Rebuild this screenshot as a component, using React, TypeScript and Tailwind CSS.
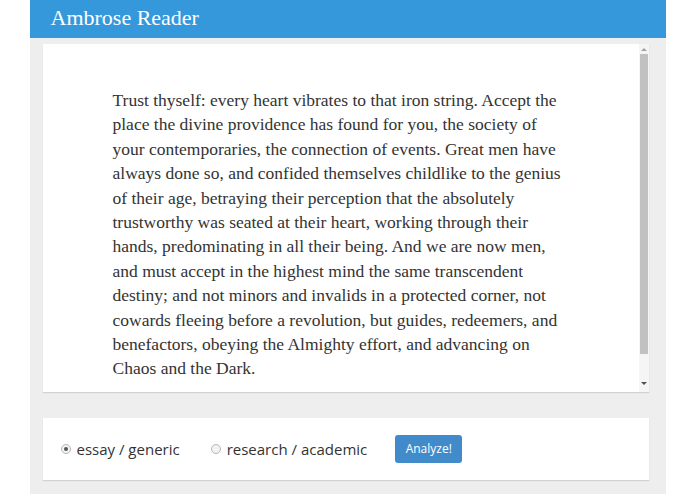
import { useState } from "react";

const lines = [
  "Trust thyself: every heart vibrates to that iron string. Accept the",
  "place the divine providence has found for you, the society of",
  "your contemporaries, the connection of events. Great men have",
  "always done so, and confided themselves childlike to the genius",
  "of their age, betraying their perception that the absolutely",
  "trustworthy was seated at their heart, working through their",
  "hands, predominating in all their being. And we are now men,",
  "and must accept in the highest mind the same transcendent",
  "destiny; and not minors and invalids in a protected corner, not",
  "cowards fleeing before a revolution, but guides, redeemers, and",
  "benefactors, obeying the Almighty effort, and advancing on",
  "Chaos and the Dark.",
];

function Radio({ checked, label, onClick }: { checked: boolean; label: string; onClick: () => void }) {
  return (
    <label className="flex items-center gap-[6px] cursor-pointer" onClick={onClick}>
      <span className="flex h-[10px] w-[10px] items-center justify-center rounded-full border border-[#b5b5b5] bg-[#f3f3f3]">
        {checked && <span className="h-[4px] w-[4px] rounded-full bg-[#555]" />}
      </span>
      <span className="text-[15px] text-[#333]">{label}</span>
    </label>
  );
}

export default function App() {
  const [mode, setMode] = useState("essay");

  return (
    <div className="min-h-[494px] bg-white" style={{ fontFamily: '"Open Sans", "Noto Sans", sans-serif' }}>
      <div className="mx-auto flex min-h-[494px] w-[636px] flex-col bg-[#eeeeee]">
        <header className="flex h-[38px] items-center bg-[#3598db] pb-[4px] pl-[21px]">
          <h1 className="text-[22px] text-white" style={{ fontFamily: '"Liberation Serif", serif' }}>
            Ambrose Reader
          </h1>
        </header>

        <div className="pl-[13px] pr-[17px] pt-[6px]">
          <div className="flex h-[348px] bg-white shadow-[0_1px_1px_rgba(0,0,0,0.12)]">
            <div className="flex-1 overflow-hidden pl-[70px] pt-[44px]">
              <p
                className="whitespace-nowrap text-[17.5px] leading-[24.4px] text-[#333]"
                style={{ fontFamily: '"Liberation Serif", serif' }}
              >
                {lines.map((l) => (
                  <span key={l} className="block">
                    {l}
                  </span>
                ))}
              </p>
            </div>
            <div className="flex w-[10px] flex-col items-center bg-[#f5f5f5] py-[2px]">
              <span className="mt-[2px] h-0 w-0 border-x-[3px] border-b-[3px] border-x-transparent border-b-[#a3a3a3]" />
              <div className="mt-[3px] h-[300px] w-[8px] bg-[#c1c1c1]" />
              <div className="flex-1" />
              <span className="mb-[5px] h-0 w-0 border-x-[3px] border-t-[3px] border-x-transparent border-t-[#505050]" />
            </div>
          </div>

          <div className="mt-[26px] flex h-[62px] items-center bg-white pl-[18px] shadow-[0_1px_1px_rgba(0,0,0,0.12)]">
            <Radio checked={mode === "essay"} label="essay / generic" onClick={() => setMode("essay")} />
            <div className="ml-[31px]">
              <Radio checked={mode === "research"} label="research / academic" onClick={() => setMode("research")} />
            </div>
            <button className="ml-[28px] h-[28px] w-[67px] rounded-[3px] bg-[#428bca] text-[12px] text-white">
              Analyze!
            </button>
          </div>
        </div>
      </div>
    </div>
  );
}
